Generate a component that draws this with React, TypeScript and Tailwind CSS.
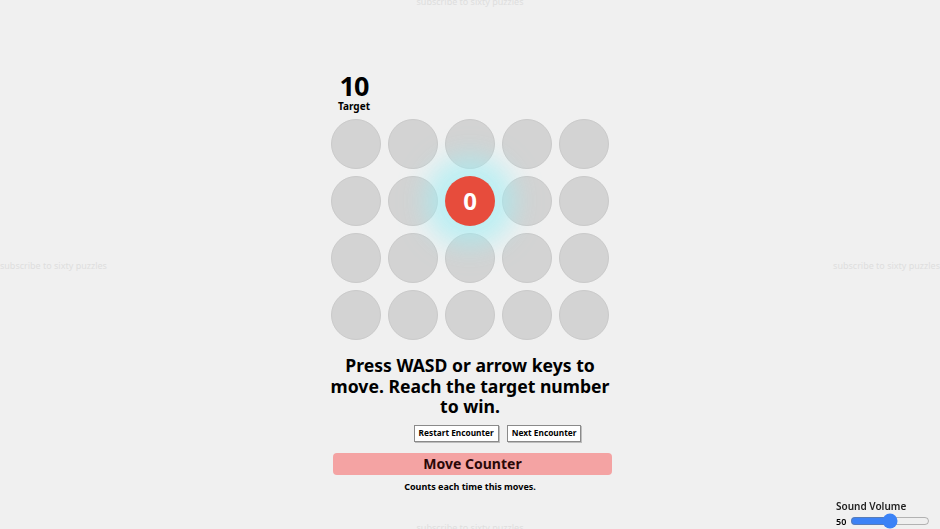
import { useState } from 'react';

const ROWS = 4;
const COLS = 5;

function Cell({ active, value }: { active: boolean; value: number }) {
  if (active) {
    return (
      <div className="relative z-10 flex h-[50px] w-[50px] items-center justify-center rounded-full bg-[#e74c3c] text-[24px] font-bold text-white shadow-[0_0_26px_20px_rgba(160,238,244,0.65)]">
        {value}
      </div>
    );
  }
  return <div className="h-[50px] w-[50px] rounded-full border border-[#cacaca] bg-[#d3d3d3]" />;
}

function Watermark({ className }: { className: string }) {
  return (
    <div className={`pointer-events-none absolute text-[9px] text-[#dedede] select-none ${className}`}>
      subscribe to sixty puzzles
    </div>
  );
}

export default function App() {
  const [volume, setVolume] = useState(50);
  const pos = { r: 1, c: 2 };

  return (
    <main
      className="relative flex min-h-screen flex-col items-center overflow-hidden bg-[#f0f0f0] pt-[73px] text-black"
      style={{ fontFamily: '"Noto Sans", "DejaVu Sans", sans-serif' }}
    >
      <Watermark className="left-1/2 top-[-5px] -translate-x-1/2" />
      <Watermark className="left-0 top-[259px]" />
      <Watermark className="right-0 top-[259px]" />
      <Watermark className="bottom-[-5px] left-1/2 -translate-x-1/2" />

      <div className="flex w-[292px] flex-col items-center">
        {/* Target */}
        <div className="ml-[5px] flex w-[50px] flex-col items-center self-start">
          <div className="text-[27px] leading-[26px] font-bold tracking-[-1px]">10</div>
          <div className="mt-[1px] text-[10px] leading-[12px] font-bold">Target</div>
        </div>

        {/* Board */}
        <div className="mt-[7px] grid grid-cols-5 gap-[7px]">
          {Array.from({ length: ROWS * COLS }).map((_, i) => {
            const r = Math.floor(i / COLS);
            const c = i % COLS;
            return <Cell key={i} active={r === pos.r && c === pos.c} value={0} />;
          })}
        </div>

        <p className="mt-[15px] text-center text-[17.6px] leading-[20.5px] font-bold">
          Press WASD or arrow keys to move. Reach the target number to win.
        </p>

        <div className="mt-[8px] flex gap-[8px] pl-[55px]">
          <button
            type="button"
            className="h-[17px] border border-[#8a8a8a] bg-white px-[4px] text-[8.3px] leading-none font-bold shadow-[1px_1px_0_#bdbdbd]"
          >
            Restart Encounter
          </button>
          <button
            type="button"
            className="h-[17px] border border-[#8a8a8a] bg-white px-[4px] text-[8.3px] leading-none font-bold shadow-[1px_1px_0_#bdbdbd]"
          >
            Next Encounter
          </button>
        </div>

        <div className="mt-[11px] ml-[5px] flex h-[22px] w-[279px] items-center justify-center rounded-[4px] bg-[#f4a3a3] text-[14px] font-bold text-[#2a0808]">
          Move Counter
        </div>
        <div className="mt-[5px] text-[9px] font-bold">Counts each time this moves.</div>
      </div>

      {/* Sound */}
      <div className="fixed bottom-[1px] right-[8px] flex w-[96px] flex-col">
        <label className="text-[10px] leading-[12px] font-semibold text-[#222]">Sound Volume</label>
        <div className="mt-[3px] flex items-center gap-[4px]">
          <span className="text-[9px] font-semibold">{volume}</span>
          <input
            type="range"
            min={0}
            max={100}
            value={volume}
            onChange={(e) => setVolume(Number(e.target.value))}
            className="h-[8px] w-[80px] accent-[#3b82f6]"
          />
        </div>
      </div>
    </main>
  );
}
